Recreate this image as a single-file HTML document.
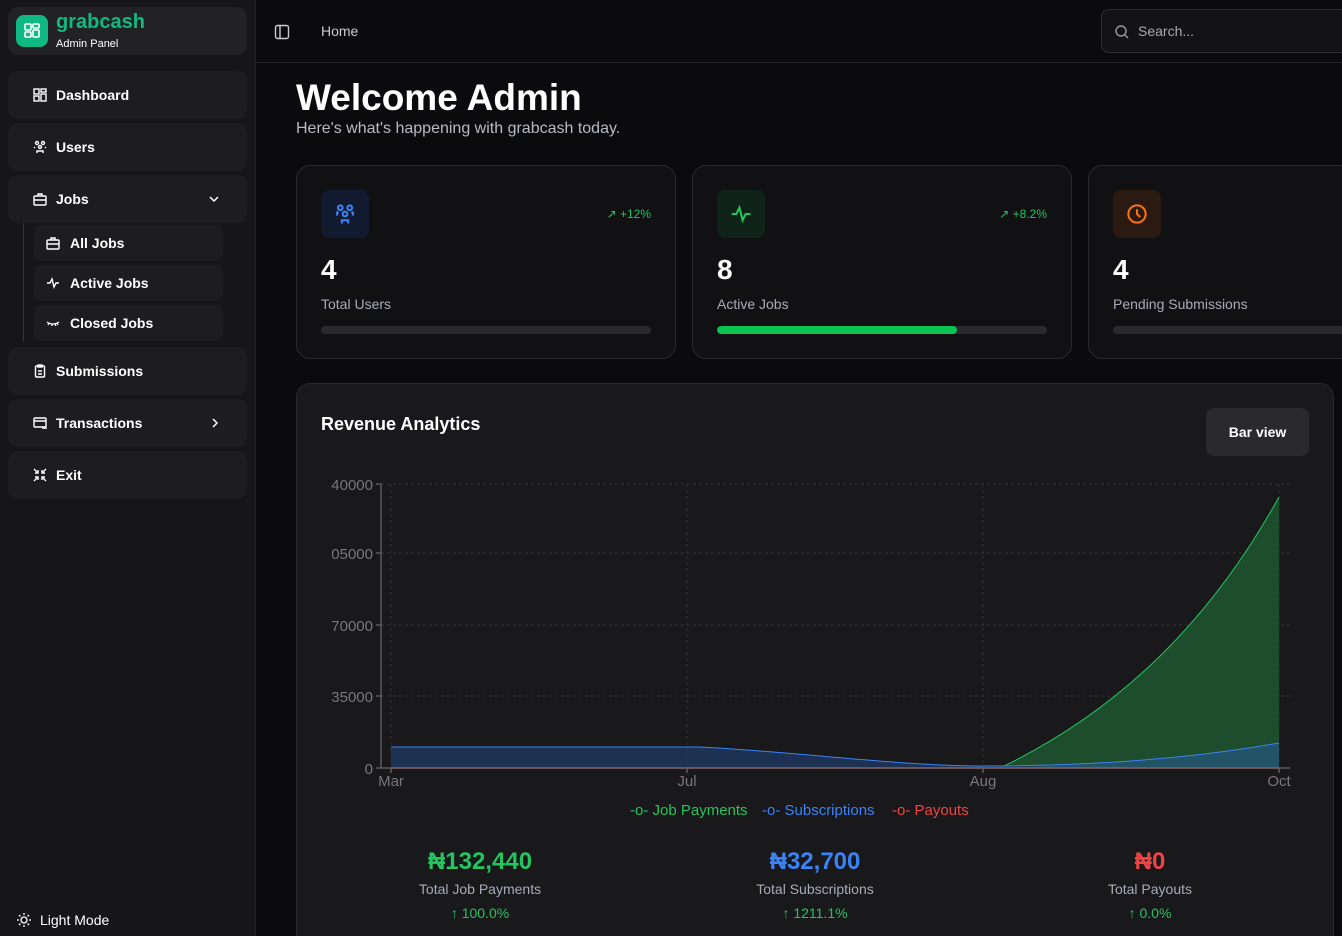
<!DOCTYPE html><html><head><meta charset="utf-8"><style>
*{box-sizing:border-box;margin:0;padding:0}
html,body{width:1342px;height:936px;overflow:hidden}
body{background:#0b0b0d;font-family:"Liberation Sans",sans-serif;color:#fff;position:relative}
.sb{position:absolute;left:0;top:0;width:256px;height:936px;background:#161618;border-right:1px solid #222}
.it{position:absolute;left:8px;width:239px;height:48px;background:#1d1d20;border-radius:10px;font-size:14px;font-weight:bold;display:flex;align-items:center;padding-left:48px}
.it svg,.si svg{position:absolute;left:25px;top:17px}
.si{position:absolute;left:34px;width:189px;height:36px;background:#1d1d20;border-radius:8px;font-size:14px;font-weight:bold;display:flex;align-items:center;padding-left:36px}
.si svg{left:12px;top:11px}
.card{position:absolute;top:165px;width:380px;height:194px;background:#111113;border:1px solid #2a2a2d;border-radius:14px}
.ic{position:absolute;left:24px;top:24px;width:48px;height:48px;border-radius:8px;display:flex;align-items:center;justify-content:center}
.num{position:absolute;left:24px;top:88px;font-size:28px;font-weight:bold}
.lbl{position:absolute;left:24px;top:130px;font-size:14px;color:#a8aab8}
.bar{position:absolute;left:24px;top:160px;width:330px;height:8px;border-radius:4px;background:#2a2a2d;overflow:hidden}
.tr{position:absolute;right:24px;top:41px;font-size:12px;color:#22c55e}
.ax{font-size:15px;fill:#77777c}
.st{position:absolute;top:848px;width:300px;text-align:center}
.st b{display:block;font-size:24px}
.st span{display:block;font-size:14px;color:#a8aab8;margin-top:5px}
.st i{display:block;font-style:normal;font-size:14px;color:#22c55e;margin-top:8px}
</style></head><body>
<div class="sb">
<div style="position:absolute;left:8px;top:7px;width:239px;height:48px;background:#222225;border-radius:10px">
<div style="position:absolute;left:8px;top:8px;width:32px;height:32px;background:#10b981;border-radius:8px"><svg width="32" height="32" viewBox="0 0 32 32" fill="none" stroke="#fff" stroke-width="1.6"><rect x="9" y="9" width="6" height="6" rx="1"/><rect x="17" y="9" width="6" height="4" rx="1"/><rect x="9" y="17" width="6" height="5" rx="1"/><rect x="17" y="15" width="6" height="7" rx="1"/></svg></div>
<div style="position:absolute;left:48px;top:4px;font-size:20px;font-weight:bold;color:#10b981">grabcash</div>
<div style="position:absolute;left:48px;top:31px;font-size:11px">Admin Panel</div></div>
<div class="it" style="top:71px"><svg width="14" height="14" viewBox="0 0 14 14" fill="none" stroke="#fff" stroke-width="1.4"><rect x="1" y="1" width="5" height="5"/><rect x="8" y="1" width="5" height="3"/><rect x="1" y="8" width="5" height="5"/><rect x="8" y="6" width="5" height="7"/></svg>Dashboard</div>
<div class="it" style="top:123px"><svg width="14" height="14" viewBox="0 0 14 14" fill="none" stroke="#fff" stroke-width="1.4"><circle cx="4" cy="3" r="1.5"/><circle cx="10" cy="3" r="1.5"/><circle cx="7" cy="7" r="1.5"/><path d="M4 13v-2h6v2M1 8l1-1M13 8l-1-1"/></svg>Users</div>
<div class="it" style="top:175px"><svg width="14" height="14" viewBox="0 0 14 14" fill="none" stroke="#fff" stroke-width="1.4"><rect x="1" y="4" width="12" height="9" rx="1"/><path d="M5 4V2h4v2M1 8h12"/></svg>Jobs<svg style="left:200px;top:19px" width="12" height="10" viewBox="0 0 12 10" fill="none" stroke="#fff" stroke-width="1.5"><path d="M2 3l4 4 4-4"/></svg></div>
<div style="position:absolute;left:23px;top:223px;width:1px;height:119px;background:#333"></div>
<div class="si" style="top:225px"><svg width="14" height="14" viewBox="0 0 14 14" fill="none" stroke="#fff" stroke-width="1.4"><rect x="1" y="4" width="12" height="9" rx="1"/><path d="M5 4V2h4v2M1 8h12"/></svg>All Jobs</div>
<div class="si" style="top:265px"><svg width="14" height="14" viewBox="0 0 14 14" fill="none" stroke="#fff" stroke-width="1.4"><path d="M1 7h3l2-4 2 8 2-4h3"/></svg>Active Jobs</div>
<div class="si" style="top:305px"><svg width="14" height="14" viewBox="0 0 14 14" fill="none" stroke="#fff" stroke-width="1.3"><path d="M1 6q6 4 12 0M3 7l-1 2M6 8v2M9 8l1 2M11 7l1 2"/></svg>Closed Jobs</div>
<div class="it" style="top:347px"><svg width="14" height="14" viewBox="0 0 14 14" fill="none" stroke="#fff" stroke-width="1.4"><rect x="2.5" y="2" width="9" height="11" rx="1"/><rect x="5" y="1" width="4" height="2"/><path d="M5 7h4M5 10h4"/></svg>Submissions</div>
<div class="it" style="top:399px"><svg width="14" height="14" viewBox="0 0 14 14" fill="none" stroke="#fff" stroke-width="1.4"><rect x="1" y="2" width="12" height="9" rx="1"/><path d="M1 5h12M9 12h4l-1-1"/></svg>Transactions<svg style="left:202px;top:18px" width="10" height="12" viewBox="0 0 10 12" fill="none" stroke="#fff" stroke-width="1.5"><path d="M3 2l4 4-4 4"/></svg></div>
<div class="it" style="top:451px"><svg width="14" height="14" viewBox="0 0 14 14" fill="none" stroke="#fff" stroke-width="1.4"><path d="M1 1l4 4M5 2v3H2M13 1L9 5M9 2v3h3M1 13l4-4M5 12V9H2M13 13L9 9M9 12V9h3"/></svg>Exit</div>
<div style="position:absolute;left:16px;top:912px;font-size:14px;display:flex;align-items:center;gap:8px"><svg width="16" height="16" viewBox="0 0 16 16" fill="none" stroke="#fff" stroke-width="1.3"><circle cx="8" cy="8" r="3"/><path d="M8 1v2M8 13v2M1 8h2M13 8h2M3 3l1.4 1.4M11.6 11.6L13 13M3 13l1.4-1.4M11.6 4.4L13 3"/></svg>Light Mode</div>
</div>
<div style="position:absolute;left:256px;top:62px;width:1086px;height:1px;background:#222"></div>
<svg style="position:absolute;left:274px;top:24px" width="16" height="16" viewBox="0 0 16 16" fill="none" stroke="#ccc" stroke-width="1.4"><rect x="1.5" y="1.5" width="13" height="13" rx="2"/><path d="M6 2v12"/></svg>
<div style="position:absolute;left:321px;top:23px;font-size:14px;color:#ccc">Home</div>
<div style="position:absolute;left:1101px;top:9px;width:260px;height:44px;border:1px solid #2f2f33;border-radius:8px;background:#131315"><svg style="position:absolute;left:12px;top:14px" width="16" height="16" viewBox="0 0 16 16" fill="none" stroke="#999" stroke-width="1.4"><circle cx="7" cy="7" r="5"/><path d="M11 11l3 3"/></svg><span style="position:absolute;left:36px;top:13px;font-size:14px;color:#aaa">Search...</span></div>
<div style="position:absolute;left:296px;top:77px;font-size:37px;font-weight:bold">Welcome Admin</div>
<div style="position:absolute;left:296px;top:120px;font-size:16px;color:#b8bac5">Here's what's happening with grabcash today.</div>
<div class="card" style="left:296px"><div class="ic" style="background:#111a2e"><svg width="22" height="22" viewBox="0 0 14 14" fill="none" stroke="#3b82f6" stroke-width="1.3"><circle cx="4" cy="3" r="1.5"/><circle cx="10" cy="3" r="1.5"/><circle cx="7" cy="7" r="1.5"/><path d="M5 13v-2h4v2M2 8V6h1M12 8V6h-1"/></svg></div><div class="tr">↗ +12%</div><div class="num">4</div><div class="lbl">Total Users</div><div class="bar"></div></div>
<div class="card" style="left:692px"><div class="ic" style="background:#0f2318"><svg width="22" height="22" viewBox="0 0 14 14" fill="none" stroke="#22c55e" stroke-width="1.3"><path d="M1 7h3l2-4 2 8 2-4h3"/></svg></div><div class="tr">↗ +8.2%</div><div class="num">8</div><div class="lbl">Active Jobs</div><div class="bar"><div style="width:240px;height:8px;background:#0ac350;border-radius:4px"></div></div></div>
<div class="card" style="left:1088px"><div class="ic" style="background:#2a1a12"><svg width="22" height="22" viewBox="0 0 14 14" fill="none" stroke="#f97316" stroke-width="1.3"><circle cx="7" cy="7" r="5.5"/><path d="M7 4v3l2 2"/></svg></div><div class="num">4</div><div class="lbl">Pending Submissions</div><div class="bar" style="width:300px"></div></div>
<div style="position:absolute;left:296px;top:383px;width:1038px;height:580px;background:#19191b;border:1px solid #2a2a2d;border-radius:14px">
<div style="position:absolute;left:24px;top:30px;font-size:18px;font-weight:bold">Revenue Analytics</div>
<div style="position:absolute;left:909px;top:24px;width:103px;height:48px;background:#2a2a2d;border-radius:8px;font-size:14px;font-weight:bold;display:flex;align-items:center;justify-content:center">Bar view</div>
</div>
<svg style="position:absolute;left:0;top:0" width="1342" height="936">
<g stroke="#333" stroke-dasharray="3 3"><path d="M381 484H1290M381 553H1290M381 625H1290M381 696H1290M391 484V768M687 484V768M983 484V768M1279 484V768"/></g>
<path d="M1000 768C1100 720 1200 640 1279 497V768Z" fill="#1d4d2d" stroke="none"/>
<path d="M1000 768C1100 720 1200 640 1279 497" fill="none" stroke="#22c55e"/>
<path d="M391 747H700C800 752 900 766 983 766C1100 766 1200 757 1279 743V768H391Z" fill="#1e3559" opacity=".9"/>
<path d="M1010 768C1100 764 1200 757 1279 743V768Z" fill="#245a6a" opacity=".8"/>
<path d="M391 747H700C800 752 900 766 983 766C1100 766 1200 757 1279 743" fill="none" stroke="#3b82f6"/>
<path d="M391 768H1279" stroke="#c0504a" stroke-width="1.5"/>
<path d="M381 484V768H1290M376 484h5M376 553h5M376 625h5M376 696h5M376 768h5M391 768v5M687 768v5M983 768v5M1279 768v5" stroke="#666" fill="none" stroke-width="1.3"/>
<g class="ax" text-anchor="end"><text x="373" y="490">40000</text><text x="373" y="559">05000</text><text x="373" y="631">70000</text><text x="373" y="702">35000</text><text x="373" y="774">0</text></g>
<g class="ax" text-anchor="middle" font-size="14"><text x="391" y="786">Mar</text><text x="687" y="786">Jul</text><text x="983" y="786">Aug</text><text x="1279" y="786">Oct</text></g>
<g font-size="15"><text x="630" y="815" fill="#22c55e">-o- Job Payments</text><text x="762" y="815" fill="#3b82f6">-o- Subscriptions</text><text x="892" y="815" fill="#ef4444">-o- Payouts</text></g>
</svg>
<div class="st" style="left:330px"><b style="color:#22c55e">₦132,440</b><span>Total Job Payments</span><i>↑ 100.0%</i></div>
<div class="st" style="left:665px"><b style="color:#3b82f6">₦32,700</b><span>Total Subscriptions</span><i>↑ 1211.1%</i></div>
<div class="st" style="left:1000px"><b style="color:#ef4444">₦0</b><span>Total Payouts</span><i>↑ 0.0%</i></div>
</body></html>
